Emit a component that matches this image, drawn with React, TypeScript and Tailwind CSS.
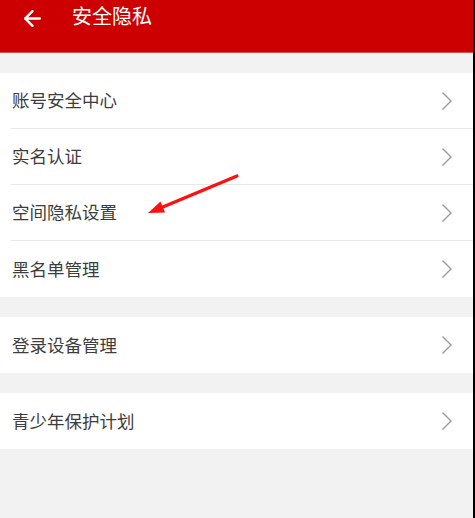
import { ReactElement } from "react";
import { ArrowLeft } from "lucide-react";

const font = { fontFamily: '"Noto Sans CJK SC", "Noto Sans", sans-serif' };

function Chevron(): ReactElement {
    return (
        <svg width="12" height="20" viewBox="0 0 12 20" className="mr-[20px]">
            <polyline
                points="1.5,1.5 10,10 1.5,18.5"
                fill="none"
                stroke="#9a9a9a"
                strokeWidth="1.4"
            />
        </svg>
    );
}

function Row({ label, last }: { label: string; last?: boolean }): ReactElement {
    return (
        <div className="flex h-[56px] flex-col bg-white pl-[11px]">
            <div className="flex flex-1 items-center justify-between">
                <span className="pl-px text-[17.5px] text-[#3d3d3d]">{label}</span>
                <Chevron />
            </div>
            {!last && <div className="h-px bg-[#e8e8e8]" />}
        </div>
    );
}

export default function App(): ReactElement {
    const groups: string[][] = [
        ["账号安全中心", "实名认证", "空间隐私设置", "黑名单管理"],
        ["登录设备管理"],
        ["青少年保护计划"],
    ];

    return (
        <div
            className="relative h-[518px] w-[475px] overflow-hidden border-r-2 border-black bg-[#f2f2f2]"
            style={font}
        >
            <div className="flex h-[53px] items-start border-b border-[#d95050] bg-[#cc0000] text-white">
                <ArrowLeft className="ml-[20px] mt-[6px]" size={25} strokeWidth={2.3} />
                <span className="ml-[27px] mt-[3px] text-[20px] leading-[26px]">安全隐私</span>
            </div>
            <div className="flex flex-col gap-[20px] pt-[20px]">
                {groups.map((g, i) => (
                    <div key={i} className="flex flex-col">
                        {g.map((label, j) => (
                            <Row key={label} label={label} last={j === g.length - 1} />
                        ))}
                    </div>
                ))}
            </div>
            <svg
                className="pointer-events-none absolute left-0 top-0"
                width="475"
                height="518"
            >
                <line
                    x1="237"
                    y1="176"
                    x2="158"
                    y2="209"
                    stroke="#ff0f0f"
                    strokeWidth="3.2"
                    strokeLinecap="round"
                />
                <polygon points="148,213 160.5,201.4 165.1,212.4" fill="#ff0f0f" />
            </svg>
        </div>
    );
}
